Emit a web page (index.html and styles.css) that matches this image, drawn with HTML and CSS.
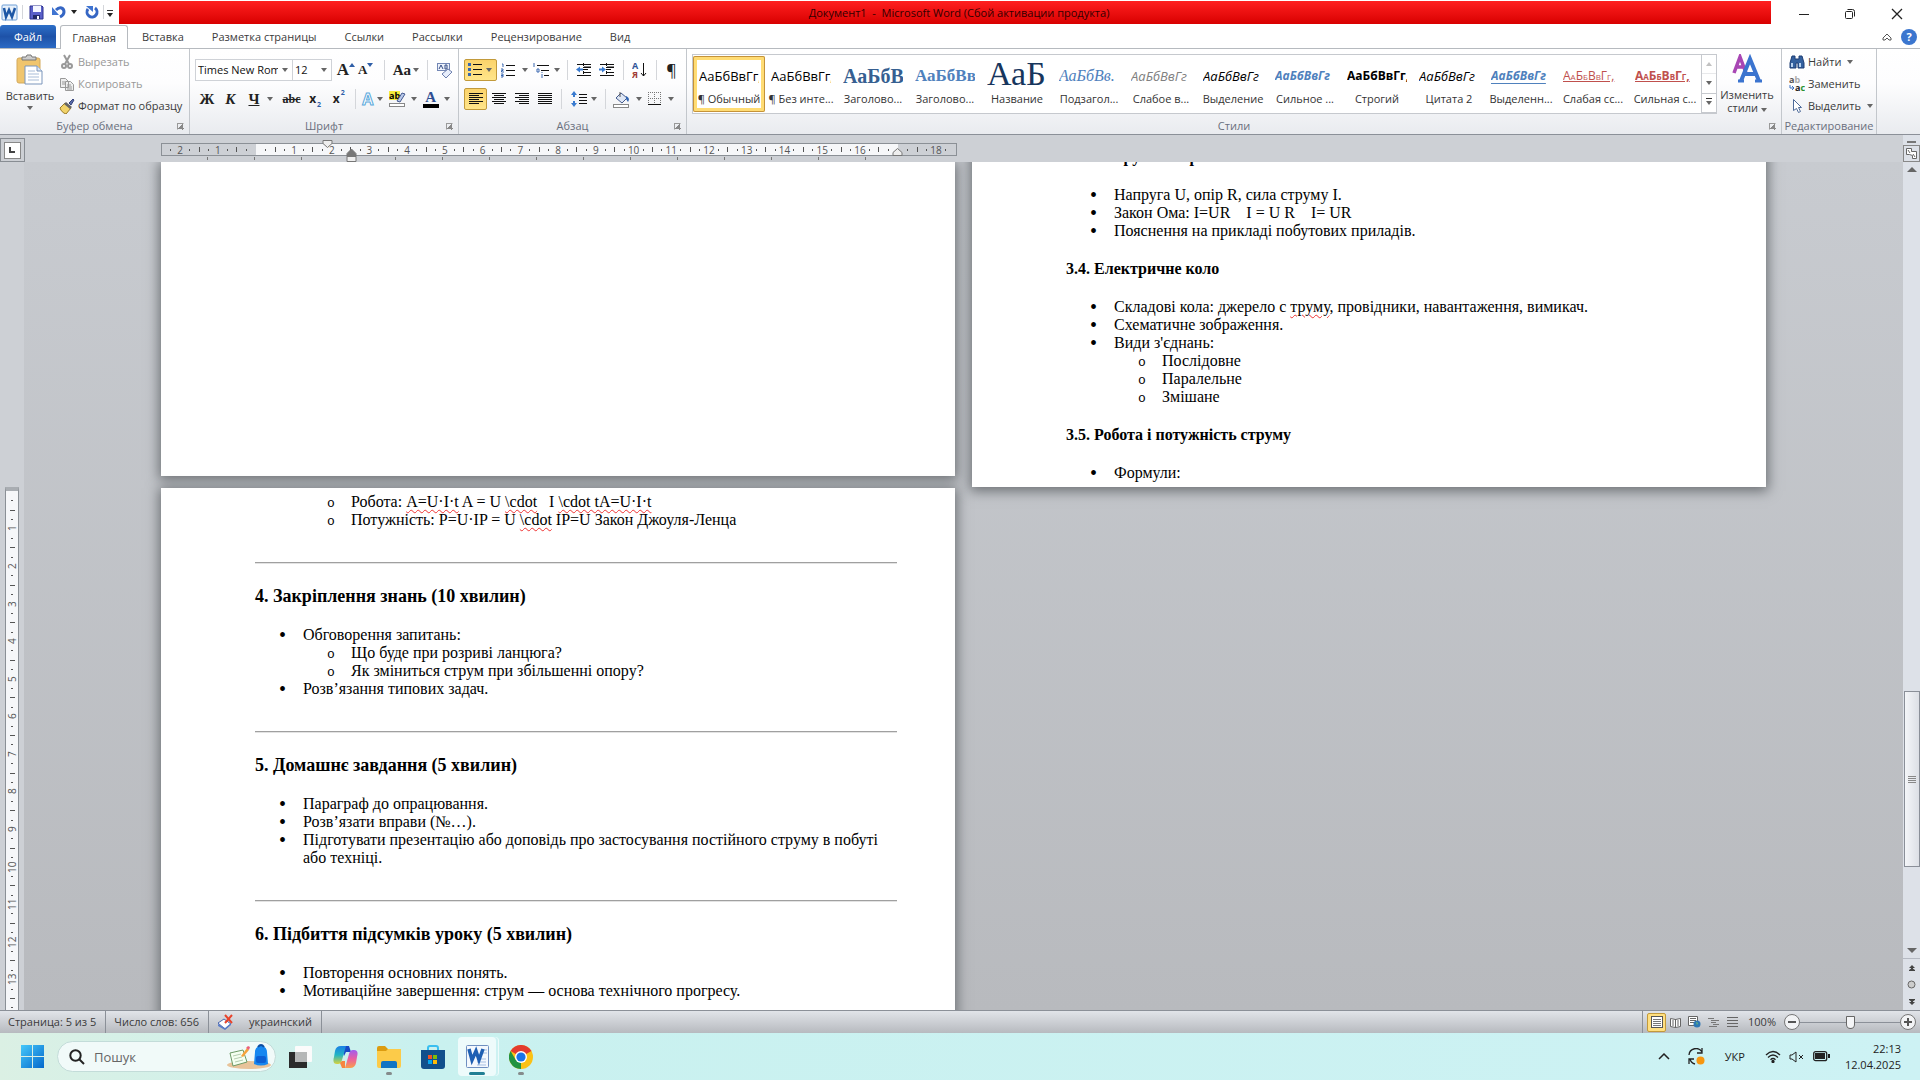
FILE: index.html
```html
<!DOCTYPE html>
<html lang="ru">
<head>
  <meta charset="UTF-8">
  <title>Документ1 - Microsoft Word</title>
  <link rel="stylesheet" href="styles.css">
</head>
<body>

  <header class="titlebar">
    <div class="quick">
      <svg width="17" height="17" viewBox="0 0 17 17"><rect x="1" y="1" width="15" height="15" rx="1" fill="#e8f1fb" stroke="#6f9fd6"/><path d="M3 4l2 9 3-7 3 7 3-9" fill="none" stroke="#1d57a5" stroke-width="2.5"/></svg>
      <i class="vline"></i>
      <button aria-label="Сохранить"><svg width="15" height="15" viewBox="0 0 15 15"><path d="M1 1h12l1 1v12H1z" fill="#5a60c8" stroke="#2d3190"/><path d="M4 1h8v6H4z" fill="#f4f6ff"/><path d="M4 10h7v4H4z" fill="#222a66"/><path d="M8 11h2v3H8z" fill="#fff"/></svg></button>
      <button class="undo" aria-label="Отменить"><svg width="14" height="14" viewBox="0 0 14 14"><path d="M4 5c4-4 8-2 8 2 0 3-2 4-4 5" fill="none" stroke="#3566c4" stroke-width="3"/><path d="M0 2v8h7z" fill="#3f74d1"/></svg><i class="caret dark"></i></button>
      <button aria-label="Повторить"><svg width="14" height="14" viewBox="0 0 14 14"><path d="M10 3a5 5 0 1 1-7 1" fill="none" stroke="#3566c4" stroke-width="3"/><path d="M1 1h7v6z" fill="#3f74d1"/></svg></button>
      <i class="vline"></i>
      <button class="more" aria-label="Настройка панели"><i class="caret dark lined"></i></button>
    </div>
    <div class="title">Документ1&nbsp; -&nbsp; Microsoft Word (Сбой активации продукта)</div>
    <div class="window-buttons">
      <button aria-label="Свернуть"><svg width="12" height="12"><path d="M1 6.500h10" stroke="#222"/></svg></button>
      <button aria-label="Восстановить"><svg width="12" height="12" fill="none" stroke="#222"><rect x="1.5" y="3.5" width="7" height="7" rx="1"/><path d="M3.5 1.500h5q2 0 2 2v5"/></svg></button>
      <button aria-label="Закрыть"><svg width="12" height="12"><path d="M1 1l10 10M11 1L1 11" stroke="#222" stroke-width="1.3"/></svg></button>
    </div>
  </header>

  <nav class="tabs">
    <button class="tab file">Файл</button>
    <button class="tab active">Главная</button>
    <button class="tab">Вставка</button>
    <button class="tab">Разметка страницы</button>
    <button class="tab">Ссылки</button>
    <button class="tab">Рассылки</button>
    <button class="tab">Рецензирование</button>
    <button class="tab">Вид</button>
    <div class="help">
      <button aria-label="Свернуть ленту"><svg width="10" height="8"><path d="M1 5l4-4 4 4v2H7L5 5 3 7H1z" fill="#fff" stroke="#555"/></svg></button>
      <button class="help-button" aria-label="Справка">?</button>
    </div>
  </nav>

  <section class="ribbon">
    <div class="group clipboard">
      <div class="group-body">
        <button class="big paste">
          <svg width="28" height="32" viewBox="0 0 28 32"><rect x="1" y="4" width="23" height="25" rx="2" fill="#f0c56d" stroke="#d3a95c"/><path d="M6 6V3h4l1-2h4l1 2h4v3z" fill="#ccc" stroke="#777"/><path d="M9 12h12l5 5v13H9z" fill="#fff" stroke="#7b95bb"/><path d="M21 12v5h5" fill="#dce7f5" stroke="#7b95bb"/><path d="M12 17h7M12 20h11M12 23h11M12 26h11" stroke="#a9bdd8"/></svg>
          <span>Вставить</span>
          <i class="caret"></i>
        </button>
        <div class="stack">
          <button class="row-button off"><svg width="16" height="16" viewBox="0 0 16 16" fill="none" stroke="#999" stroke-width="2"><path d="M5 1l5 9M11 1L6 10"/><circle cx="5" cy="12" r="2"/><circle cx="11" cy="12" r="2"/></svg>Вырезать</button>
          <button class="row-button off"><svg width="16" height="16" viewBox="0 0 16 16" fill="#eee" stroke="#999"><path d="M1.5 2.5h5l3 3v6h-8zM6.5 5.5h5l3 3v6h-8z"/><path d="M3 6h3M3 8h3M8 9h4M8 11h5M8 13h5"/></svg>Копировать</button>
          <button class="row-button"><svg width="16" height="16" viewBox="0 0 16 16"><path d="M10 5l4-4 1 1-3 5z" fill="#5a6ba8" stroke="#34437c"/><path d="M6 5l6 5-5 6c-3-1-5-3-6-6z" fill="#f1d36a" stroke="#9b7b25"/><path d="M7 4l6 5-2 2-6-5z" fill="#666"/></svg>Формат по образцу</button>
        </div>
      </div>
      <div class="group-label">Буфер обмена<i class="launcher"></i></div>
    </div>

    <div class="group font">
      <div class="group-body column">
        <div class="tools">
          <label class="combo family"><select aria-label="Шрифт"><option>Times New Rom</option></select><i class="caret"></i></label>
          <label class="combo size"><select aria-label="Размер шрифта"><option>12</option></select><i class="caret"></i></label>
          <button class="tool serif grow" aria-label="Увеличить размер">A<i class="caret up"></i></button>
          <button class="tool serif shrink" aria-label="Уменьшить размер">A<i class="caret"></i></button>
          <i class="vline"></i>
          <button class="tool serif case" aria-label="Регистр">Aa<i class="caret"></i></button>
          <i class="vline"></i>
          <button class="tool" aria-label="Очистить формат"><svg width="17" height="17" viewBox="0 0 17 17"><rect x="1.5" y="1.5" width="12" height="7" fill="#edf2fb" stroke="#7387b5"/><path d="M3 7l2-4 2 4M9 3v4h2V3z" stroke="#334a83" fill="none"/><path d="M6 12l6-5 4 3-6 6z" fill="#e8eefb" stroke="#6d7fae"/></svg></button>
        </div>
        <div class="tools second">
          <button class="tool serif">Ж</button>
          <button class="tool serif italic">К</button>
          <button class="tool serif wide"><u>Ч</u><i class="caret"></i></button>
          <button class="tool serif strike"><s>abc</s></button>
          <button class="tool index">x<sub>2</sub></button>
          <button class="tool index">x<sup>2</sup></button>
          <i class="vline"></i>
          <button class="tool effect">A<i class="caret"></i></button>
          <button class="tool mark" aria-label="Цвет выделения"><svg width="17" height="17" viewBox="0 0 17 17"><rect width="11" height="9" fill="#f5ec3d"/><text x="0" y="8" font-size="9" font-weight="bold">ab</text><path d="M8 10l5-8 3 1-5 8z" fill="#b9c9ea" stroke="#44598f"/><rect x=".5" y="12.500" width="15" height="3" fill="#fff" stroke="#888"/></svg><i class="caret"></i></button>
          <button class="tool serif fontcolor"><span>A</span><i class="caret"></i></button>
        </div>
      </div>
      <div class="group-label">Шрифт<i class="launcher"></i></div>
    </div>

    <div class="group paragraph">
      <div class="group-body column">
        <div class="tools">
          <button class="tool pressed split" aria-label="Маркеры"><svg width="14" height="14" viewBox="0 0 14 14"><path d="M5 1.500h9M5 6.500h9M5 11.500h9" stroke="#111"/><path d="M0 1.500h3M0 6.500h3M0 11.500h3" stroke="#3867b0" stroke-width="3"/></svg><i class="caret"></i></button>
          <button class="tool gap" aria-label="Нумерация"><svg width="15" height="15" viewBox="0 0 15 15"><path d="M5 2.500h9M5 7.500h9M5 12.500h9" stroke="#111"/><path d="M1 1h1v3M0 6h2v1.500H.5V9H3M0 11h2v3H0M0 12.500h2" stroke="#3867b0" fill="none"/></svg><i class="caret"></i></button>
          <button class="tool" aria-label="Многоуровневый список"><svg width="17" height="15" viewBox="0 0 17 15"><path d="M4 2.500h12M8 7.500h8M11 12.500h5" stroke="#111"/><path d="M1 0v4M4 6h2v3H4zM9 11v4M9 9v1" stroke="#3867b0" fill="none"/></svg><i class="caret"></i></button>
          <i class="vline"></i>
          <button class="tool" aria-label="Уменьшить отступ"><svg width="16" height="14" viewBox="0 0 16 14"><path d="M1 1.500h14M7 4.500h8M7 6.500h5M7 9.500h8M1 12.500h14M8 4h7" stroke="#111"/><path d="M7.500 0v14" stroke="#111" stroke-dasharray="1 1"/><path d="M0 6.500l4-3v2h3v2H4v2z" fill="#3a7bd0"/></svg></button>
          <button class="tool" aria-label="Увеличить отступ"><svg width="16" height="14" viewBox="0 0 16 14"><path d="M1 1.500h14M7 4.500h8M7 6.500h5M7 9.500h8M1 12.500h14M8 4h7" stroke="#111"/><path d="M7.500 0v14" stroke="#111" stroke-dasharray="1 1"/><path d="M7 6.500l-4-3v2H0v2h3v2z" fill="#3a7bd0"/></svg></button>
          <i class="vline"></i>
          <button class="tool" aria-label="Сортировка"><svg width="15" height="16" viewBox="0 0 15 16"><text x="0" y="7" font-size="9" font-weight="bold" fill="#2f5597">А</text><text x="0" y="16" font-size="9" font-weight="bold" fill="#a03a36">Я</text><path d="M11.500 1v13M9 11l2.500 3 2.500-3" stroke="#111" fill="none"/></svg></button>
          <i class="vline"></i>
          <button class="tool pilcrow">¶</button>
        </div>
        <div class="tools second">
          <button class="tool pressed" aria-label="По левому краю"><svg width="14" height="12"><path d="M0 .5h14M0 2.500h10M0 4.500h14M0 6.500h10M0 8.500h14M0 10.500h10" stroke="#111"/></svg></button>
          <button class="tool" aria-label="По центру"><svg width="14" height="12"><path d="M0 .5h14M2 2.500h10M0 4.500h14M2 6.500h10M0 8.500h14M2 10.500h10" stroke="#111"/></svg></button>
          <button class="tool" aria-label="По правому краю"><svg width="14" height="12"><path d="M0 .5h14M4 2.500h10M0 4.500h14M4 6.500h10M0 8.500h14M4 10.500h10" stroke="#111"/></svg></button>
          <button class="tool" aria-label="По ширине"><svg width="14" height="12"><path d="M0 .5h14M0 2.500h14M0 4.500h14M0 6.500h14M0 8.500h14M0 10.500h14" stroke="#111"/></svg></button>
          <i class="vline"></i>
          <button class="tool" aria-label="Интервал"><svg width="16" height="16" viewBox="0 0 16 16"><path d="M8 3.500h8M8 6.500h8M8 9.500h8M8 12.500h8" stroke="#111"/><path d="M3 0l3 4H4v2H2V4H0zM3 16l3-4H4v-2H2v2H0z" fill="#3a7bd0"/></svg><i class="caret"></i></button>
          <i class="vline"></i>
          <button class="tool gap" aria-label="Заливка"><svg width="17" height="17" viewBox="0 0 17 17"><path d="M3 7l5-5 6 5-5 5z" fill="#dfe7f5" stroke="#445a8c"/><path d="M7 1v5" stroke="#555"/><path d="M13 5c4 2 3 4 2 6l-2-3z" fill="#2f62b0"/><rect x=".5" y="13.500" width="15" height="3" fill="#fff" stroke="#888"/></svg><i class="caret"></i></button>
          <button class="tool gap" aria-label="Границы"><svg width="14" height="14" viewBox="0 0 14 14"><path d="M.5 0v12M6.500 0v12M12.500 0v12M0 .5h13M0 6.500h13" stroke="#777" stroke-dasharray="1 1"/><path d="M0 12.500h13" stroke="#111"/></svg><i class="caret"></i></button>
        </div>
      </div>
      <div class="group-label">Абзац<i class="launcher"></i></div>
    </div>

    <div class="group styles">
      <div class="group-body">
        <div class="gallery">
          <button class="style selected"><span class="sample">АаБбВвГг,</span><span>¶ Обычный</span></button>
          <button class="style"><span class="sample">АаБбВвГг,</span><span>¶ Без инте...</span></button>
          <button class="style"><span class="sample h1">АаБбВ</span><span>Заголово...</span></button>
          <button class="style"><span class="sample h2">АаБбВв</span><span>Заголово...</span></button>
          <button class="style"><span class="sample name">АаБ</span><span>Название</span></button>
          <button class="style"><span class="sample sub">АаБбВв.</span><span>Подзагол...</span></button>
          <button class="style"><span class="sample it grey">АаБбВвГг</span><span>Слабое в...</span></button>
          <button class="style"><span class="sample it">АаБбВвГг</span><span>Выделение</span></button>
          <button class="style"><span class="sample it bold blue">АаБбВвГг</span><span>Сильное ...</span></button>
          <button class="style"><span class="sample bold">АаБбВвГг,</span><span>Строгий</span></button>
          <button class="style"><span class="sample it">АаБбВвГг</span><span>Цитата 2</span></button>
          <button class="style"><span class="sample it bold blue lined">АаБбВвГг</span><span>Выделенн...</span></button>
          <button class="style"><span class="sample caps">АаБбВвГг,</span><span>Слабая сс...</span></button>
          <button class="style"><span class="sample caps bold">АаБбВвГг,</span><span>Сильная с...</span></button>
          <div class="gallery-scroll">
            <button class="faded" aria-label="Вверх"><i class="caret up"></i></button>
            <button aria-label="Вниз"><i class="caret"></i></button>
            <button aria-label="Все стили"><i class="caret lined"></i></button>
          </div>
        </div>
        <button class="big change">
          <svg width="30" height="29" viewBox="0 0 30 29"><path d="M2 19L8 3l6 16M5 13h8" fill="none" stroke="#a846b4" stroke-width="3.5"/><path d="M9 27L18 5l9 22M13 20h10" fill="none" stroke="#3b74cf" stroke-width="4"/><path d="M6 27h6M23 27h7" stroke="#3b74cf" stroke-width="3"/></svg>
          <span>Изменить<br>стили <i class="caret"></i></span>
        </button>
      </div>
      <div class="group-label">Стили<i class="launcher"></i></div>
    </div>

    <div class="group edit">
      <div class="group-body">
        <div class="stack">
          <button class="row-button"><svg width="16" height="16" viewBox="0 0 16 16"><path d="M3 2h3v3h4V2h3l2 7v5H9V9H7v5H1V9z" fill="#34619f" stroke="#1f3f75"/><path d="M3 9v4M11 9v4" stroke="#b8d2f0" stroke-width="2"/></svg>Найти<i class="caret"></i></button>
          <button class="row-button"><svg width="16" height="16" viewBox="0 0 16 16"><text x="0" y="7" font-size="9" font-weight="bold" fill="#555">a<tspan fill="#aaa">b</tspan></text><path d="M1 9v3h4M3 10l2 2-2 2" fill="none" stroke="#3a6fc0"/><text x="6" y="15" font-size="9" font-weight="bold" fill="#222">a<tspan fill="#27912f">c</tspan></text></svg>Заменить</button>
          <button class="row-button"><svg width="16" height="16" viewBox="0 0 16 16"><path d="M4.500 1.500v11l3-2 2 4 2-1-2-4h3z" fill="#fff" stroke="#4d6a99"/></svg>Выделить<i class="caret"></i></button>
        </div>
      </div>
      <div class="group-label">Редактирование</div>
    </div>
  </section>

  <main class="workspace">
    <div class="corner"><button class="tab-stop" aria-label="Табуляция"></button></div>
    <div class="ruler-row">
      <div class="ruler">
        <div class="ruler-part before" data-labels="2 1"></div>
        <div class="ruler-part inside" data-labels="1 2 3 4 5 6 7 8 9 10 11 12 13 14 15 16"></div>
        <div class="ruler-part after" data-labels="18"></div>
        <svg class="indent first" width="11" height="8"><path d="M1 .5h9v3L5.500 7.500 1 3.500z" fill="#eee" stroke="#777"/></svg>
        <svg class="indent left" width="11" height="14"><path d="M1 8.500h9v5H1z" fill="#eee" stroke="#777"/><path d="M1 8.500V5.500L5.500 1 10 5.500v3z" fill="#777" stroke="#777"/></svg>
        <svg class="indent right" width="11" height="8"><path d="M1 7.500h9v-3L5.500.5 1 4.500z" fill="#eee" stroke="#777"/></svg>
      </div>
      <div class="stops"></div>
    </div>
    <div class="vruler"><div class="vruler-track" id="vruler"></div></div>

    <div class="canvas">
      <div class="sheets">
        <div class="sheet-column">
          <article class="sheet blank"></article>
          <article class="sheet" lang="uk">
            <ul class="tail">
              <li class="plain">
                <ul>
                  <li>Робота: <span class="err">A=U·I·t</span> A = U <span class="err">\cdot</span> &nbsp; I <span class="err">\cdot tA=U·I·t</span></li>
                  <li>Потужність: P=U·IP = U <span class="err">\cdot</span> IP=U Закон Джоуля-Ленца</li>
                </ul>
              </li>
            </ul>
            <hr>
            <h2>4. Закріплення знань (10 хвилин)</h2>
            <ul>
              <li>Обговорення запитань:
                <ul>
                  <li>Що буде при розриві ланцюга?</li>
                  <li>Як зміниться струм при збільшенні опору?</li>
                </ul>
              </li>
              <li>Розв’язання типових задач.</li>
            </ul>
            <hr>
            <h2>5. Домашнє завдання (5 хвилин)</h2>
            <ul>
              <li>Параграф до опрацювання.</li>
              <li>Розв’язати вправи (№…).</li>
              <li>Підготувати презентацію або доповідь про застосування постійного струму в побуті або техніці.</li>
            </ul>
            <hr>
            <h2>6. Підбиття підсумків уроку (5 хвилин)</h2>
            <ul>
              <li>Повторення основних понять.</li>
              <li>Мотиваційне завершення: струм — основа технічного прогресу.</li>
            </ul>
          </article>
        </div>
        <div class="sheet-column">
          <article class="sheet scrolled" lang="uk">
            <h3>3.3. Напруга і опір</h3>
            <ul>
              <li>Напруга U, опір R, сила струму I.</li>
              <li>Закон Ома: I=UR &nbsp;&nbsp; I = U R &nbsp;&nbsp; I= UR</li>
              <li>Пояснення на прикладі побутових приладів.</li>
            </ul>
            <h3>3.4. Електричне коло</h3>
            <ul>
              <li>Складові кола: джерело с <span class="err">труму</span>, провідники, навантаження, вимикач.</li>
              <li>Схематичне зображення.</li>
              <li>Види з'єднань:
                <ul>
                  <li>Послідовне</li>
                  <li>Паралельне</li>
                  <li>Змішане</li>
                </ul>
              </li>
            </ul>
            <h3>3.5. Робота і потужність струму</h3>
            <ul>
              <li>Формули:</li>
            </ul>
          </article>
        </div>
      </div>
    </div>

    <aside class="scrollbar">
      <i class="splitter"></i>
      <button class="ruler-toggle" aria-label="Линейка"><svg width="13" height="13" viewBox="0 0 13 13" fill="#fff" stroke="#666"><path d="M1.500 1.500h5v3h5v7h-4v-3l-3-1h-3z"/><path d="M3 3l2 3M8 7l2 3"/></svg></button>
      <button class="arrow" aria-label="Вверх"><i class="caret up"></i></button>
      <div class="track"><div class="thumb"></div></div>
      <button class="arrow" aria-label="Вниз"><i class="caret"></i></button>
      <div class="browse">
        <button aria-label="Предыдущая страница"><svg width="6" height="6"><path d="M0 3l3-3 3 3zM2 2h2v2H2zM0 5l3-2 3 2v1H0z" fill="#444"/></svg></button>
        <button aria-label="Объект перехода"><svg width="9" height="9"><circle cx="4.500" cy="4.500" r="3.500" fill="#ccc" stroke="#666"/></svg></button>
        <button aria-label="Следующая страница"><svg width="6" height="6"><path d="M0 0h6v1L3 3 0 1zM2 2h2v2H2zM0 3h6L3 6z" fill="#444"/></svg></button>
      </div>
    </aside>
  </main>

  <footer class="status">
    <button>Страница: 5 из 5</button>
    <button>Число слов: 656</button>
    <button class="lang"><svg width="17" height="16" viewBox="0 0 17 16"><path d="M1 9l6-4 7 5-6 5z" fill="#fff" stroke="#4b66ad"/><path d="M1 10v2l7 4 6-5v-2l-6 5z" fill="#5a7cc8"/><path d="M8 1l7 8M15 1L8 9" stroke="#e8432c" stroke-width="2"/></svg>украинский</button>
    <div class="views">
      <button class="on" aria-label="Разметка страницы"><svg width="12" height="12"><rect x=".5" y=".5" width="11" height="11" fill="#fff" stroke="#555"/><path d="M2 3.500h8M2 5.500h8M2 7.500h8M2 9.500h8" stroke="#777"/></svg></button>
      <button aria-label="Чтение"><svg width="12" height="11"><path d="M.5 1.500l5 1 5-1v8l-5 1-5-1zM5.500 2v9M2 4h2M2 6h2M2 8h2M7 4h2M7 6h2M7 8h2" fill="#fff" stroke="#666"/></svg></button>
      <button aria-label="Веб-документ"><svg width="13" height="12"><path d="M.5.5h9v9h-9zM2 2.500h6M2 4.500h6M2 6.500h4" fill="#fff" stroke="#666"/><circle cx="9" cy="8" r="3.500" fill="#2f78b5"/><path d="M8 6l2 1-1 2z" fill="#6cc06c"/></svg></button>
      <button aria-label="Структура"><svg width="12" height="11"><path d="M0 1.500h6M3 3.500h8M3 5.500h5M5 7.500h6M1 9.500h8" stroke="#777"/></svg></button>
      <button aria-label="Черновик"><svg width="11" height="10"><path d="M0 .5h11M0 3.500h11M0 6.500h11M0 9.500h11" stroke="#666"/></svg></button>
      <button class="percent">100%</button>
      <button class="round" aria-label="Уменьшить"><svg width="8" height="8"><path d="M0 4h8" stroke="#555" stroke-width="2"/></svg></button>
      <input type="range" min="0" max="200" value="100" aria-label="Масштаб">
      <button class="round" aria-label="Увеличить"><svg width="8" height="8"><path d="M0 4h8M4 0v8" stroke="#555" stroke-width="2"/></svg></button>
    </div>
  </footer>

  <div class="taskbar">
    <button class="start" aria-label="Пуск"><svg width="23" height="23" viewBox="0 0 23 23"><defs><linearGradient id="win" x2="1" y2="1"><stop stop-color="#44c8fa"/><stop offset="1" stop-color="#0568cc"/></linearGradient></defs><path d="M0 0h11v11H0zM12 0h11v11H12zM0 12h11v11H0zM12 12h11v11H12z" fill="url(#win)"/></svg></button>
    <label class="search">
      <svg width="16" height="16" viewBox="0 0 16 16" fill="none" stroke="#222" stroke-width="2"><circle cx="6.500" cy="6.500" r="5.200"/><path d="M10.500 10.500L15 15"/></svg>
      <input type="text" placeholder="Пошук">
      <svg width="44" height="26" viewBox="0 0 44 26"><ellipse cx="22" cy="21" rx="22" ry="4" fill="#e8c39a"/><path d="M3 9l13-3 4 12-14 4z" fill="#f4fff0" stroke="#6d9a66"/><path d="M6 12l8-2M7 15l8-2M8 18l8-2" stroke="#b4ccb0"/><path d="M14 12l6-8 2 2-6 7z" fill="#f6a33b"/><path d="M19 4l2-2 2 1-1 3z" fill="#ea5f7d"/><path d="M28 8c0-8 12-8 12 0l1 12q-7 3-14 0z" fill="#1687f0"/><rect x="29" y="12" width="10" height="7" rx="2" fill="#0b5fd4"/><path d="M31 3q3-4 6 0" stroke="#0b4ca0" fill="none" stroke-width="2"/></svg>
    </label>
    <button class="app" aria-label="Представление задач"><svg width="24" height="24" viewBox="0 0 24 24"><rect x="6" y="1" width="17" height="16" rx="1" fill="#fbfbfb"/><path d="M0 7h18v16H0z" fill="#2b2b2b"/><path d="M6 7h12v10H6z" fill="#b5b7b7"/></svg></button>
    <button class="app" aria-label="Copilot">
      <svg width="25" height="24" viewBox="0 0 25 24">
        <defs>
          <linearGradient id="cop1" x1="0" y1="0" x2="0" y2="1"><stop stop-color="#1b7fe6"/><stop offset=".5" stop-color="#21b5c4"/><stop offset="1" stop-color="#d9d23c"/></linearGradient>
          <linearGradient id="cop2" x1="0" y1="0" x2="0" y2="1"><stop stop-color="#a05cf0"/><stop offset=".5" stop-color="#ea5fa0"/><stop offset="1" stop-color="#f9a04a"/></linearGradient>
        </defs>
        <path d="M16 1l2 6h-5L11 11 8 1z" fill="#1749c5"/>
        <path d="M8 1h5L9 15q-1 4-4 4H4q-5 0-3-7l1-6q1-5 6-5z" fill="url(#cop1)"/>
        <path d="M17 23h-5l4-14q1-4 4-4h1q5 0 3 7l-1 6q-1 5-6 5z" fill="url(#cop2)"/>
        <path d="M9 23l-2-5 2-2 3 0 0 7z" fill="#f6863f"/>
      </svg>
    </button>
    <button class="app running" aria-label="Проводник"><svg width="24" height="22" viewBox="0 0 24 22"><path d="M0 2q0-2 2-2h6l3 3h11q1 0 1 2v4H0z" fill="#dc9c10"/><path d="M0 5l9 0 2-2h13v17q0 2-2 2H2q-2 0-2-2z" fill="#fccb49"/><path d="M4 22v-5q0-2 2-2h12q2 0 2 2v5z" fill="#1174c4"/></svg></button>
    <button class="app" aria-label="Магазин"><svg width="24" height="24" viewBox="0 0 24 24"><path d="M7 6V3q0-2 2-2h6q2 0 2 2v3" fill="none" stroke="#39bff0" stroke-width="2"/><path d="M0 5h24v16q0 3-3 3H3q-3 0-3-3z" fill="#114f8c"/><path d="M7 10h4v4H7z" fill="#f35325"/><path d="M12 10h4v4h-4z" fill="#81bc06"/><path d="M7 15h4v4H7z" fill="#05a6f0"/><path d="M12 15h4v4h-4z" fill="#ffba08"/></svg></button>
    <button class="app current" aria-label="Word"><svg width="23" height="23" viewBox="0 0 23 23"><rect x=".5" y=".5" width="22" height="22" rx="1" fill="#f4f8fd" stroke="#6f8fc0"/><path d="M11 14h9M11 17h9M11 20h9M16 5h5M16 8h5" stroke="#a5bfe2"/><path d="M3 4l3 11 4-9 3 9 4-11" fill="none" stroke="#1e5fb3" stroke-width="3.5"/></svg></button>
    <button class="app running" aria-label="Chrome"><svg width="24" height="24" viewBox="0 0 24 24"><circle cx="12" cy="12" r="12" fill="#fbc116"/><path d="M12 12L1.600 6A12 12 0 0 1 22.400 6z" fill="#e33b2e"/><path d="M12 12v12A12 12 0 0 1 1.600 6l5.200 9z" fill="#229342"/><circle cx="12" cy="12" r="6" fill="#fff"/><circle cx="12" cy="12" r="4.600" fill="#1a73e8"/></svg></button>

    <div class="tray">
      <button aria-label="Скрытые значки"><svg width="12" height="8"><path d="M1 6l5-5 5 5" fill="none" stroke="#222" stroke-width="1.5"/></svg></button>
      <button class="sync" aria-label="Обновление"><svg width="17" height="17" viewBox="0 0 17 17"><path d="M1 7a7 7 0 0 1 13-3M14 0v5H9M2 11a7 7 0 0 0 5 5M1 16v-5h5" fill="none" stroke="#222" stroke-width="1.3"/><circle cx="12.500" cy="12.500" r="4" fill="#f7960f"/></svg></button>
      <button class="layout">УКР</button>
      <button class="net" aria-label="Сеть и звук">
        <svg width="16" height="13" viewBox="0 0 16 13" fill="none" stroke="#222" stroke-width="1.3"><path d="M1 5q7-7 14 0M3 7.500q5-5 10 0M5.500 9.800q2.500-2.500 5 0"/><circle cx="8" cy="11.500" r="1" fill="#222"/></svg>
        <svg width="16" height="12" viewBox="0 0 16 12" fill="none" stroke="#222"><path d="M1 4h2l4-3v10L3 8H1zM10 4l4 4M14 4l-4 4"/></svg>
        <svg width="17" height="11" viewBox="0 0 17 11"><rect x=".7" y=".7" width="13" height="9" rx="2" fill="none" stroke="#222" stroke-width="1.3"/><path d="M2 2h10v6H2zM15 3h2v4h-2z" fill="#222"/></svg>
      </button>
      <button class="clock">22:13<br>12.04.2025</button>
    </div>
  </div>

  <script>
    const dot = '<i class="dot"></i>';
    const gap = dot + '<i class="bar"></i>' + dot;

    // gap and number for every centimetre
    function scale(labels) {
      return labels.map(label => gap + '<b>' + label + '</b>').join('');
    }

    document.querySelectorAll('.ruler-part').forEach(part => {
      const labels = part.dataset.labels.split(' ');
      if (part.classList.contains('before')) {
        part.innerHTML = dot + labels.map(label => '<b>' + label + '</b>' + gap).join('');
      } else if (part.classList.contains('after')) {
        part.innerHTML = scale(labels) + dot;
      } else {
        part.innerHTML = scale(labels) + gap;
      }
    });

    const rows = Array.from({length: 14}, (_, i) => i + 1);
    document.getElementById('vruler').innerHTML = scale(rows);
  </script>

</body>
</html>
```
FILE: styles.css
```css
* {
  box-sizing: border-box;
}
body {
  margin: 0;
  height: 100vh;
  display: flex;
  flex-direction: column;
  overflow: hidden;
  font-family: "Open Sans", "Noto Sans", sans-serif;
  font-size: 11px;
  line-height: 16px;
  color: #3b3b3b;
  background: #fff;
}
button {
  margin: 0;
  padding: 0;
  border: 0;
  background: none;
  font: inherit;
  color: inherit;
  display: flex;
  align-items: center;
  white-space: nowrap;
}
svg {
  display: block;
  flex: none;
}
.caret {
  display: inline-block;
  flex: none;
  border: 3px solid transparent;
  border-top: 4px solid #666;
  border-bottom: 0;
}
.caret.dark {
  border-top-color: #222;
}
.caret.up {
  border-top: 0;
  border-bottom: 4px solid #666;
}
.caret.lined {
  position: relative;
}
.caret.lined::before {
  content: "";
  position: absolute;
  left: -3px;
  top: -7px;
  width: 6px;
  height: 1px;
  background: #333;
}
.vline {
  width: 1px;
  height: 20px;
  background: #d4d6da;
  flex: none;
}

/* title bar */
.titlebar {
  display: flex;
  height: 24px;
  flex: none;
}
.quick {
  width: 119px;
  display: flex;
  align-items: center;
  gap: 6px;
  padding-left: 1px;
  flex: none;
}
.quick .vline {
  height: 14px;
  margin-left: -2px;
}
.quick .undo {
  gap: 5px;
  margin: 0 2px;
}
.quick .more {
  margin-left: -3px;
  padding-top: 6px;
}
.title {
  flex: 1;
  margin: 1px 0 0;
  padding-left: 28px;
  background: linear-gradient(#ff2020, #d80000);
  color: #300;
  text-align: center;
  line-height: 23px;
}
.window-buttons {
  display: flex;
  width: 149px;
  padding-left: 10px;
}
.window-buttons button {
  flex: 1;
  justify-content: center;
  padding-top: 4px;
}

/* tabs */
.tabs {
  display: flex;
  height: 25px;
  padding-top: 1px;
  border-bottom: 1px solid #b6babf;
  flex: none;
}
.tab {
  padding: 0 14px;
}
.tab.file {
  width: 56px;
  justify-content: center;
  margin-right: 4px;
  padding: 0;
  border-radius: 3px 3px 0 0;
  background: linear-gradient(#2d6fc8, #1e52a8 50%, #2c6ac4);
  color: #fff;
}
.tab.active {
  width: 68px;
  justify-content: center;
  padding: 0;
  margin-bottom: -1px;
  border: 1px solid #b6babf;
  border-bottom: 0;
  border-radius: 3px 3px 0 0;
  background: #fff;
}
.help {
  margin-left: auto;
  display: flex;
  align-items: center;
  gap: 9px;
  padding-right: 3px;
}
.help-button {
  width: 16px;
  height: 16px;
  justify-content: center;
  border-radius: 50%;
  background: #3b76cf;
  color: #fff;
  font-weight: bold;
}

/* ribbon */
.ribbon {
  display: flex;
  height: 86px;
  flex: none;
  padding-right: 43px;
  background: linear-gradient(#fff, #fdfdfe 40%, #e9ebef);
  border-bottom: 1px solid #8b9098;
}
.group {
  display: flex;
  flex-direction: column;
  border-right: 1px solid #c3c7cc;
  flex: none;
}
.clipboard {
  width: 190px;
}
.font {
  width: 269px;
}
.paragraph {
  width: 228px;
}
.styles {
  flex: 1;
  min-width: 0;
}
.edit {
  width: 95px;
}
.group-body {
  flex: 1;
  display: flex;
  padding: 2px 5px 0;
}
.group-body.column {
  flex-direction: column;
  padding-top: 10px;
}
.group-label {
  position: relative;
  height: 16px;
  text-align: center;
  color: #6a6f7d;
}
.launcher {
  position: absolute;
  right: 5px;
  top: 5px;
  width: 7px;
  height: 7px;
  border: 1px solid #999;
  border-right-color: transparent;
  border-bottom-color: transparent;
  background: linear-gradient(135deg, transparent 50%, #888 50%);
}
.big {
  flex-direction: column;
  gap: 2px;
  padding-top: 3px;
}
.paste {
  width: 50px;
}
.change {
  width: 58px;
  margin-left: 1px;
  line-height: 13px;
  gap: 5px;
}
.stack {
  display: flex;
  flex-direction: column;
}
.row-button {
  height: 22px;
  gap: 3px;
}
.clipboard .stack {
  padding-left: 4px;
}
.row-button .caret {
  margin-left: 3px;
}
.off {
  color: #999;
}

/* font and paragraph tools */
.tools {
  display: flex;
  align-items: center;
  height: 22px;
}
.tools.second {
  margin-top: 7px;
}
.combo {
  display: flex;
  align-items: center;
  height: 22px;
  border: 1px solid #cfd2d7;
  background: #fff;
}
.combo select {
  appearance: none;
  border: 0;
  padding: 0 0 0 2px;
  background: none;
  font: inherit;
  color: #111;
  min-width: 0;
  flex: 1;
}
.combo .caret {
  margin: 0 4px;
}
.family {
  width: 98px;
}
.size {
  width: 44px;
  margin: 0 4px 0 -1px;
}
.tool {
  height: 22px;
  justify-content: center;
  gap: 4px;
  color: #222;
}
.serif {
  font-family: "Liberation Serif", serif;
  font-weight: bold;
  font-size: 15px;
}
.grow,
.shrink {
  width: 22px;
  gap: 0;
}
.grow {
  font-size: 17px;
}
.shrink {
  font-size: 13px;
}
.grow .caret,
.shrink .caret {
  align-self: flex-start;
  margin-top: 4px;
  border-top-color: #2f5fa8;
  border-bottom-color: #2f5fa8;
}
.font .tools .vline {
  margin: 0 8px;
}
.tools .case {
  gap: 2px;
}
.font .second .tool {
  width: 24px;
}
.font .second .wide {
  width: 34px;
  padding-left: 4px;
  gap: 8px;
}
.italic {
  font-style: italic;
}
.font .second .strike {
  font-size: 12px;
  margin-left: 4px;
}
.index {
  font-size: 12px;
  font-weight: bold;
  gap: 1px;
}
.index sub,
.index sup {
  font-size: 7px;
  line-height: 10px;
  color: #2f5fa8;
}
.index sub {
  align-self: flex-end;
}
.index sup {
  align-self: flex-start;
}
.font .second .vline {
  margin: 0 4px;
}
.font .second .effect {
  width: 27px;
  font-size: 16px;
  font-weight: bold;
  color: #fff;
  -webkit-text-stroke: 1px #5aa9dc;
}
.font .second .mark,
.font .second .fontcolor {
  width: 34px;
  gap: 5px;
}
.fontcolor span {
  width: 16px;
  line-height: 14px;
  border-bottom: 4px solid #000;
  color: #2f4f93;
}
.paragraph .tool {
  width: 23px;
}
.paragraph .tool:has(.caret) {
  width: 33px;
}
.paragraph .gap {
  width: 36px;
  gap: 6px;
}
.paragraph .vline {
  margin: 0 5px;
}
.paragraph .pressed {
  border: 1px solid #c29a3b;
  border-radius: 2px;
  background: linear-gradient(#fbd36b, #ffe58a);
}
.paragraph .pressed.split {
  width: 34px;
  margin-right: 2px;
}
.paragraph .pilcrow {
  width: 20px;
  font-size: 16px;
}

/* style gallery */
.gallery {
  flex: 1;
  display: flex;
  min-width: 0;
  height: 60px;
  margin-top: 3px;
  border: 1px solid #c6c9ce;
  background: #fff;
  overflow: hidden;
}
.style {
  width: 72px;
  flex: none;
  flex-direction: column;
  align-items: center;
  padding: 8px 4px 0;
  color: #333;
}
.style.selected {
  margin: 1px 0;
  padding-top: 7px;
  border-radius: 2px;
  box-shadow: inset 0 0 0 1px #c5933a, inset 0 0 0 4px #ffdc74;
}
.sample {
  width: 60px;
  height: 26px;
  line-height: 26px;
  margin-bottom: 2px;
  overflow: hidden;
  text-align: left;
  font-size: 13px;
  color: #000;
}
.h1 {
  font: bold 20px/26px "Liberation Serif", serif;
  color: #365f91;
}
.h2 {
  font: bold 17px/26px "Liberation Serif", serif;
  color: #4f81bd;
}
.name {
  font: 34px/22px "Liberation Serif", serif;
  color: #17365d;
}
.sub {
  font: italic 16px/26px "Liberation Serif", serif;
  color: #4f81bd;
}
.it {
  font-style: italic;
}
.bold {
  font-weight: bold;
  font-size: 12px;
}
.grey {
  color: #808080;
}
.blue {
  color: #4f81bd;
}
.lined {
  text-decoration: underline;
  text-underline-offset: 3px;
}
.caps {
  font-size: 12px;
  font-variant: small-caps;
  text-decoration: underline;
  color: #c0504d;
}
.gallery-scroll {
  width: 15px;
  margin-left: auto;
  display: flex;
  flex-direction: column;
  border-left: 1px solid #c6c9ce;
}
.gallery-scroll button {
  flex: 1;
  justify-content: center;
  border-bottom: 1px solid #c6c9ce;
}
.gallery-scroll .faded {
  opacity: .4;
}
.edit .stack {
  padding-left: 2px;
}

/* document area */
.workspace {
  flex: 1;
  min-height: 0;
  display: grid;
  grid-template-columns: 24px 1fr 17px;
  grid-template-rows: 27px 1fr;
  background: #cdd0d5;
}
.corner {
  padding-top: 3px;
}
.tab-stop {
  width: 25px;
  height: 24px;
  border: 1px solid #888d93;
  justify-content: center;
}
.tab-stop::before {
  content: "";
  width: 15px;
  height: 15px;
  border: 1px solid #888;
  background: linear-gradient(#444, #444) 4px 4px / 2px 6px no-repeat, linear-gradient(#444, #444) 4px 8px / 6px 2px no-repeat, #fff;
}
.ruler-row {
  width: 1605px;
  margin: 0 auto;
  padding-top: 8px;
}
.ruler {
  position: relative;
  display: flex;
  width: 796px;
  height: 13px;
  border: 1px solid #8b9096;
}
.ruler-part {
  display: grid;
  grid-auto-flow: column;
  grid-auto-columns: minmax(0, 1fr);
  align-items: center;
  justify-items: center;
  font-size: 10px;
  line-height: 10px;
  color: #555;
}
.ruler-part b,
.vruler-track b {
  font-weight: normal;
}
.before {
  width: 94px;
  padding: 0 5px 0 4px;
}
.inside {
  width: 642px;
  padding: 0 5px;
  background: #f6f7f9;
}
.after {
  width: 58px;
  padding: 0 6px 0 5px;
}
.dot {
  width: 1px;
  height: 2px;
  background: #555;
}
.bar {
  width: 1px;
  height: 5px;
  background: #555;
}
.indent {
  position: absolute;
}
.first {
  left: 160px;
  top: -4px;
}
.left {
  left: 184px;
  top: 4px;
}
.right {
  left: 730px;
  top: 4px;
}
.stops {
  width: 736px;
  height: 3px;
  margin-top: 1px;
  background: repeating-linear-gradient(90deg, transparent 0 46px, #777 46px 47px);
}
.vruler {
  grid-column: 1;
  grid-row: 2;
  padding: 325px 5px 0;
  overflow: hidden;
}
.vruler-track {
  width: 14px;
  height: 536px;
  padding-top: 5px;
  border: 1px solid #8b9096;
  border-top-width: 4px;
  border-top-color: #a9adb2;
  background: #f6f7f9;
  display: grid;
  grid-auto-rows: minmax(0, 1fr);
  align-items: center;
  justify-items: center;
  font-size: 10px;
  color: #555;
}
.vruler-track b {
  height: 9px;
  line-height: 12px;
  writing-mode: vertical-rl;
  transform: rotate(180deg);
  display: flex;
  justify-content: center;
}
.vruler-track .dot {
  width: 2px;
  height: 1px;
}
.vruler-track .bar {
  width: 5px;
  height: 1px;
}
.canvas {
  grid-column: 2;
  grid-row: 2;
  overflow: hidden;
  background: linear-gradient(#c8cbd0, #b8babe);
}
.sheets {
  display: flex;
  align-items: flex-start;
  gap: 17px;
  width: 1605px;
  margin: 0 auto;
}
.sheet-column {
  display: flex;
  flex-direction: column;
  gap: 12px;
}
.sheet {
  width: 794px;
  padding: 5px 58px 40px 94px;
  background: #fff;
  box-shadow: 0 2px 12px 2px #6b6f73;
  font-family: "Liberation Serif", serif;
  font-size: 16px;
  line-height: 18px;
  color: #000;
}
.blank {
  height: 314px;
  padding: 0;
}
.scrolled {
  margin-top: -14px;
  padding-top: 0;
  padding-bottom: 5px;
}
.sheet h2 {
  margin: 0 0 20px;
  font-size: 18px;
  line-height: 20px;
}
.sheet h3 {
  margin: 0 0 20px;
  font-size: 16px;
  line-height: 18px;
}
.sheet hr {
  width: 642px;
  height: 2px;
  margin: 0 0 22px;
  border: 0;
  border-top: 1px solid #a0a0a0;
  border-bottom: 1px solid #e3e3e3;
}
.sheet ul {
  margin: 0 0 33px;
  padding-left: 48px;
  list-style: none;
}
.sheet ul ul {
  margin: 0;
}
.scrolled ul {
  margin-bottom: 20px;
}
.scrolled > ul:last-child {
  margin-bottom: 0;
}
.sheet li::before {
  content: "•";
  display: inline-block;
  width: 24px;
  margin-left: -24px;
  font-size: 20px;
  line-height: 8px;
  vertical-align: -2px;
}
.sheet .plain::before {
  content: none;
}
.sheet li li::before {
  content: "o";
  font-family: "Liberation Mono", monospace;
  font-size: 13px;
  vertical-align: baseline;
}
.err {
  text-decoration: underline wavy #e33 1px;
  text-underline-offset: 2px;
}

/* scroll bar */
.scrollbar {
  grid-column: 3;
  grid-row: 1 / 3;
  display: flex;
  flex-direction: column;
  align-items: center;
  padding-top: 6px;
  background: #dde1e8;
}
.splitter {
  width: 9px;
  height: 2px;
  background: #777;
}
.ruler-toggle {
  width: 17px;
  height: 17px;
  margin-top: 2px;
  justify-content: center;
  border: 1px solid #888;
}
.arrow {
  height: 15px;
}
.arrow .caret {
  border-width: 5px;
}
.arrow .up {
  border-top-width: 0;
}
.arrow .caret:not(.up) {
  border-bottom-width: 0;
}
.track {
  flex: 1;
  width: 16px;
  padding-top: 514px;
}
.thumb {
  width: 16px;
  height: 176px;
  border: 1px solid #8a8f98;
  background: repeating-linear-gradient(#888 0 1px, transparent 1px 2px) center / 8px 7px no-repeat, linear-gradient(90deg, #f4f6f9, #dcdfe5);
}
.browse {
  width: 17px;
  height: 52px;
  border-top: 1px solid #b5b9c2;
  display: flex;
  flex-direction: column;
  align-items: center;
}
.browse button {
  flex: 1;
}

/* status bar */
.status {
  display: flex;
  height: 23px;
  flex: none;
  border-top: 1px solid #8b9098;
  background: linear-gradient(#e1e4e9, #b7babf);
}
.status > button {
  padding: 0 9px 0 8px;
  border-right: 1px solid #8b9098;
}
.status .lang {
  gap: 15px;
}
.views {
  margin-left: auto;
  display: flex;
  align-items: center;
  padding: 0 4px;
  border-left: 1px solid #8b9098;
}
.views button {
  width: 19px;
  height: 19px;
  justify-content: center;
}
.views .on {
  border: 1px solid #c29a3b;
  border-radius: 2px;
  background: #ffdf80;
}
.views .percent {
  width: 40px;
  margin-right: 2px;
}
.views .round {
  width: 16px;
  height: 16px;
  border: 1px solid #777;
  border-radius: 50%;
  background: #f2f3f5;
}
.views input {
  appearance: none;
  width: 100px;
  height: 14px;
  margin: 0;
  background: linear-gradient(#8b9098, #8b9098) center / 100% 1px no-repeat;
}
.views input::-webkit-slider-thumb {
  appearance: none;
  width: 9px;
  height: 13px;
  border: 1px solid #666;
  border-radius: 1px 1px 5px 5px;
  background: #f4f5f7;
}

/* taskbar */
.taskbar {
  display: flex;
  align-items: center;
  height: 47px;
  flex: none;
  padding-left: 21px;
  background: linear-gradient(90deg, #dbf0e4, #c9f1ef 22%, #cdf2f4);
  color: #222;
}
.search {
  display: flex;
  align-items: center;
  width: 219px;
  height: 31px;
  margin: 0 6px 0 13px;
  padding: 0 4px 0 11px;
  border: 1px solid #c3dcd9;
  border-radius: 16px;
  background: #f1faf9;
}
.search input {
  flex: 1;
  min-width: 0;
  border: 0;
  padding: 0 0 0 9px;
  background: none;
  font: 13px "Open Sans", sans-serif;
}
.search input::placeholder {
  color: #666;
}
.app {
  position: relative;
  width: 38px;
  height: 39px;
  margin-right: 6px;
  justify-content: center;
}
.running::after,
.current::after {
  content: "";
  position: absolute;
  bottom: 1px;
  width: 6px;
  height: 3px;
  border-radius: 2px;
  background: #858b8b;
}
.current {
  border-radius: 4px;
  background: #eefbfb;
  box-shadow: 2px 0 0 #cdf2f2, 3px 0 0 #eefbfb;
}
.current::after {
  width: 16px;
  background: #1f7f94;
}
.tray {
  margin-left: auto;
  display: flex;
  align-items: center;
  padding-right: 19px;
}
.sync {
  margin-left: 18px;
}
.layout {
  margin: 0 20px;
}
.net {
  gap: 8px;
}
.clock {
  margin-left: 15px;
  text-align: right;
}
```
